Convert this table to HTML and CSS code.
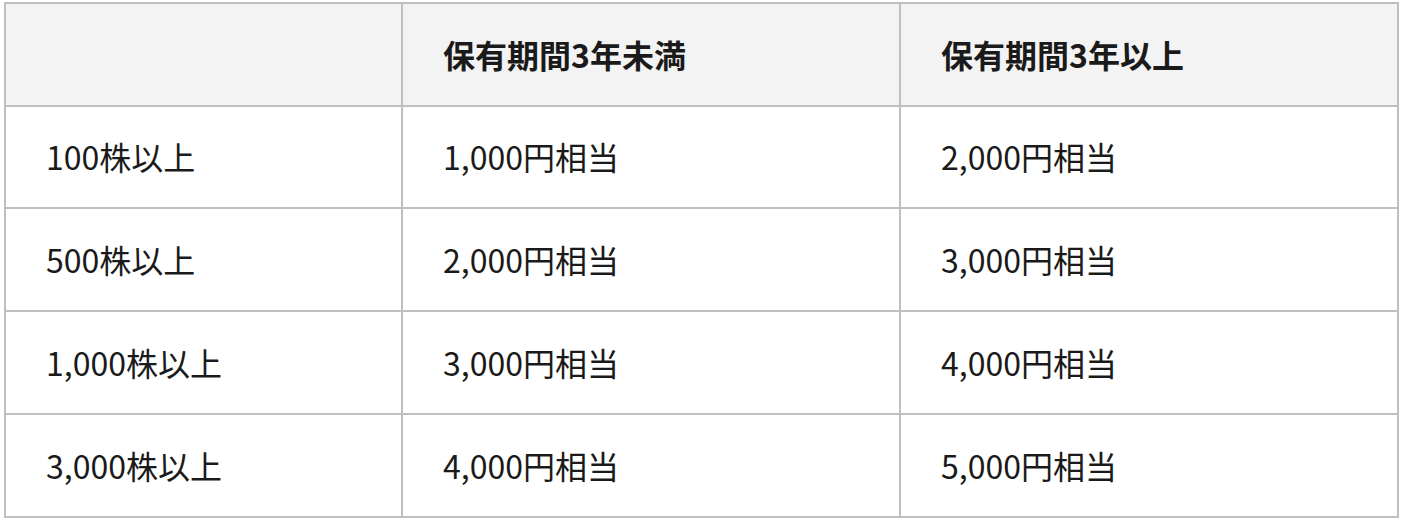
FILE: index.html
```html
<!DOCTYPE html>
<html lang="ja">
<head>
<meta charset="utf-8">
<link rel="stylesheet" href="styles.css">
</head>
<body>
<table class="benefit-table">
  <colgroup>
    <col class="col-a">
    <col class="col-b">
    <col class="col-c">
  </colgroup>
  <thead>
    <tr>
      <th></th>
      <th>保有期間3年未満</th>
      <th>保有期間3年以上</th>
    </tr>
  </thead>
  <tbody>
    <tr><td>100株以上</td><td>1,000円相当</td><td>2,000円相当</td></tr>
    <tr><td>500株以上</td><td>2,000円相当</td><td>3,000円相当</td></tr>
    <tr><td>1,000株以上</td><td>3,000円相当</td><td>4,000円相当</td></tr>
    <tr><td>3,000株以上</td><td>4,000円相当</td><td>5,000円相当</td></tr>
  </tbody>
</table>
</body>
</html>
```

FILE: styles.css
```css
html, body {
  margin: 0;
  padding: 0;
  background: #ffffff;
}
body {
  padding: 2px 0 0 4px;
  font-family: "Noto Sans CJK JP", "Noto Sans", sans-serif;
  color: #1a1a1a;
}
.benefit-table {
  border-collapse: separate;
  border-spacing: 0;
  table-layout: fixed;
  width: 1395px;
  border-top: 2px solid #bfbfbf;
  border-left: 2px solid #bfbfbf;
}
.col-a { width: 397px; }
.col-b { width: 498px; }
.col-c { width: 498px; }
.benefit-table th,
.benefit-table td {
  box-sizing: border-box;
  height: 102.75px;
  padding: 0 40px;
  border-right: 2px solid #bfbfbf;
  border-bottom: 2px solid #bfbfbf;
  text-align: left;
  vertical-align: middle;
  font-size: 32px;
  line-height: 1.4;
  white-space: nowrap;
}
.benefit-table thead th {
  height: 102.5px;
  background: #f3f3f3;
  font-weight: 700;
}
.benefit-table td {
  font-weight: 400;
}
```
